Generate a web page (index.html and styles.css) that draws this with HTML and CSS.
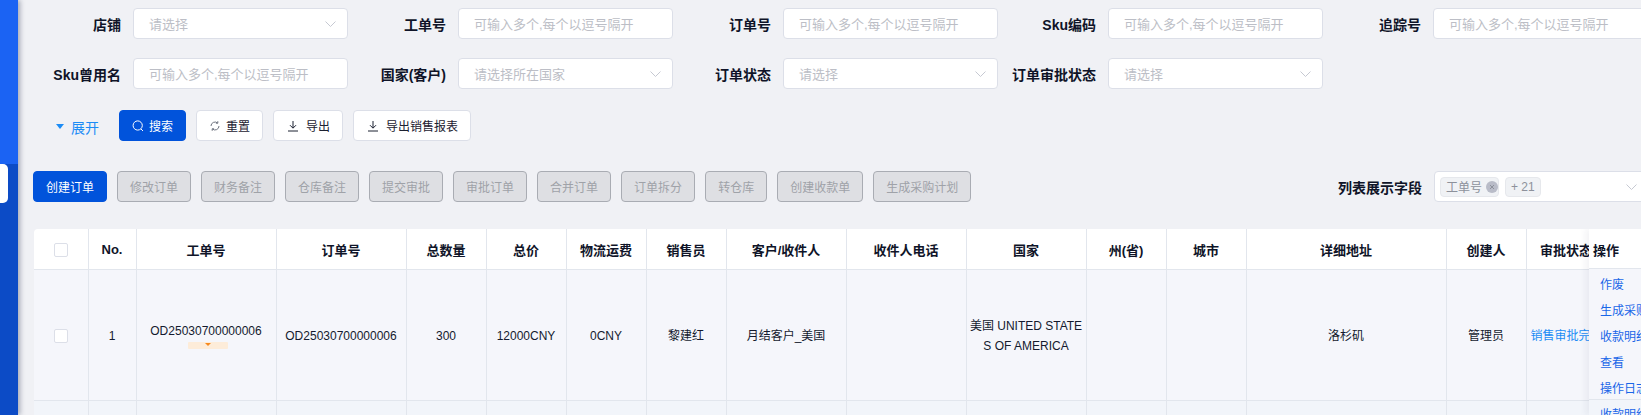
FILE: index.html
```html
<!DOCTYPE html>
<html lang="zh-CN">
<head>
<meta charset="utf-8">
<title>订单列表</title>
<link rel="stylesheet" href="styles.css">
</head>
<body>
<div class="app">
  <aside class="sidebar"><div class="side-active"></div></aside>
  <main class="main">
    <section class="filters">
      <div class="item"><span class="label">店铺</span><div class="field"><span class="ph">请选择</span><svg class="chev" viewBox="0 0 11 6"><path d="M.5.5l5 5 5-5"/></svg></div></div>
      <div class="item"><span class="label">工单号</span><div class="field"><span class="ph">可输入多个,每个以逗号隔开</span></div></div>
      <div class="item"><span class="label">订单号</span><div class="field"><span class="ph">可输入多个,每个以逗号隔开</span></div></div>
      <div class="item"><span class="label">Sku编码</span><div class="field"><span class="ph">可输入多个,每个以逗号隔开</span></div></div>
      <div class="item"><span class="label">追踪号</span><div class="field"><span class="ph">可输入多个,每个以逗号隔开</span></div></div>
      <div class="item"><span class="label">Sku曾用名</span><div class="field"><span class="ph">可输入多个,每个以逗号隔开</span></div></div>
      <div class="item"><span class="label">国家(客户)</span><div class="field"><span class="ph">请选择所在国家</span><svg class="chev" viewBox="0 0 11 6"><path d="M.5.5l5 5 5-5"/></svg></div></div>
      <div class="item"><span class="label">订单状态</span><div class="field"><span class="ph">请选择</span><svg class="chev" viewBox="0 0 11 6"><path d="M.5.5l5 5 5-5"/></svg></div></div>
      <div class="item"><span class="label">订单审批状态</span><div class="field"><span class="ph">请选择</span><svg class="chev" viewBox="0 0 11 6"><path d="M.5.5l5 5 5-5"/></svg></div></div>
    </section>

    <section class="actions">
      <div class="expand"><i class="tri"></i><span>展开</span></div>
      <button class="btn primary"><svg class="ico" viewBox="0 0 12 12"><circle cx="5.7" cy="5.5" r="4.6"/><path d="M9 9l2 2"/></svg>搜索</button>
      <button class="btn"><svg class="ico" viewBox="0 0 12 12"><path d="M2 6a4 4 0 0 1 6.6-3M10 6a4 4 0 0 1-6.6 3"/><path d="M8.8 1.2v2H6.9M3.2 10.8v-2h1.9"/></svg>重置</button>
      <button class="btn wide"><svg class="ico dl" viewBox="0 0 14 14"><path d="M7 2v7M4 6.2L7 9.2l3-3M2 12h10"/></svg>导出</button>
      <button class="btn wide"><svg class="ico dl" viewBox="0 0 14 14"><path d="M7 2v7M4 6.2L7 9.2l3-3M2 12h10"/></svg>导出销售报表</button>
    </section>

    <section class="toolbar">
      <button class="btn primary">创建订单</button>
      <button class="btn off">修改订单</button>
      <button class="btn off">财务备注</button>
      <button class="btn off">仓库备注</button>
      <button class="btn off">提交审批</button>
      <button class="btn off">审批订单</button>
      <button class="btn off">合并订单</button>
      <button class="btn off">订单拆分</button>
      <button class="btn off">转仓库</button>
      <button class="btn off">创建收款单</button>
      <button class="btn off">生成采购计划</button>
      <div class="columns-pick">
        <span class="label">列表展示字段</span>
        <div class="field multi">
          <span class="tag">工单号<i class="tag-x"><svg viewBox="0 0 12 12"><path d="M4 4l4 4M8 4l-4 4"/></svg></i></span>
          <span class="tag">+ 21</span>
          <svg class="chev" viewBox="0 0 11 6"><path d="M.5.5l5 5 5-5"/></svg>
        </div>
      </div>
    </section>

    <section class="table-wrap">
      <table class="grid">
        <colgroup>
          <col class="c54"><col class="c48"><col class="c140"><col class="c130"><col class="c80"><col class="c80"><col class="c80"><col class="c80"><col class="c120"><col class="c120"><col class="c120"><col class="c80"><col class="c80"><col class="c200"><col class="c80"><col class="c80">
        </colgroup>
        <thead>
          <tr>
            <th><span class="check"></span></th><th>No.</th><th>工单号</th><th>订单号</th><th>总数量</th><th>总价</th><th>物流运费</th><th>销售员</th><th>客户/收件人</th><th>收件人电话</th><th>国家</th><th>州(省)</th><th>城市</th><th>详细地址</th><th>创建人</th><th>审批状态</th>
          </tr>
        </thead>
        <tbody>
          <tr class="row">
            <td><span class="check"></span></td><td>1</td>
            <td><div class="order-no">OD25030700000006</div><div class="flag"><i></i></div></td>
            <td>OD25030700000006</td><td>300</td><td>12000CNY</td><td>0CNY</td><td>黎建红</td><td>月结客户_美国</td><td></td>
            <td class="country">美国 UNITED STATES OF AMERICA</td><td></td><td></td><td>洛杉矶</td><td>管理员</td><td class="status">销售审批完成</td>
          </tr>
          <tr class="row next">
            <td></td><td></td><td></td><td></td><td></td><td></td><td></td><td></td><td></td><td></td><td></td><td></td><td></td><td></td><td></td><td></td>
          </tr>
        </tbody>
      </table>
      <div class="fixed">
        <div class="fixed-head">操作</div>
        <div class="fixed-row">
          <a>作废</a><a>生成采购计划</a><a>收款明细</a><a>查看</a><a>操作日志</a><a>收款明细</a>
        </div>
      </div>
    </section>
  </main>
</div>
</body>
</html>
```
FILE: styles.css
```css
* { box-sizing: border-box; }
html, body { margin: 0; height: 100%; overflow: hidden; }
body {
  background: #f0f1f5;
  color: #141a2e;
  font-family: "Liberation Sans", "Noto Sans CJK SC", sans-serif;
  font-size: 12px;
}
.app { display: flex; height: 415px; overflow: hidden; }

.sidebar {
  flex: 0 0 18px;
  position: relative;
  background: linear-gradient(#1b63f3 0, #1b63f3 164px, #0c4bc6 164px, #0c4bc6 100%);
  box-shadow: 2px 0 5px rgba(20, 30, 60, .35);
}
.side-active {
  position: absolute;
  top: 164px;
  left: 0;
  width: 8px;
  height: 39px;
  background: #fff;
  border-radius: 0 5px 5px 0;
}

.main { flex: 1 0 auto; width: 1623px; padding-top: 8px; overflow: hidden; }

.filters {
  display: grid;
  grid-template-columns: repeat(5, 325px);
  row-gap: 19px;
  padding-left: 4px;
  width: 1650px;
}
.item { display: flex; align-items: center; gap: 12px; }
.label {
  width: 99px;
  flex: none;
  text-align: right;
  font-size: 14px;
  font-weight: 700;
  color: #0f1428;
  white-space: nowrap;
}
.field {
  width: 215px;
  height: 31px;
  flex: none;
  display: flex;
  align-items: center;
  padding: 0 11px 0 15px;
  background: #fff;
  border: 1px solid #dcdfe8;
  border-radius: 4px;
}
.ph { font-size: 13px; color: #bcbec6; white-space: nowrap; }
.chev { width: 11px; height: 6px; margin-left: auto; flex: none; }
.chev path { fill: none; stroke: #c6c9d2; stroke-width: 1; }

.actions {
  display: flex;
  align-items: center;
  gap: 10px;
  margin-top: 21px;
  padding-left: 38px;
}
.expand {
  width: 53px;
  display: flex;
  align-items: center;
  gap: 7px;
  padding-top: 2px;
  color: #1c8cf5;
  font-size: 14px;
}
.tri {
  width: 0;
  height: 0;
  border-left: 4.5px solid transparent;
  border-right: 4.5px solid transparent;
  border-top: 5px solid #1c8cf5;
}

.btn {
  height: 31px;
  padding: 0 12px;
  display: inline-flex;
  align-items: center;
  flex: none;
  gap: 5px;
  font: inherit;
  font-size: 12px;
  color: #1b2030;
  background: #fff;
  border: 1px solid #dcdfe8;
  border-radius: 4px;
}
.btn.wide { gap: 6px; }
.btn.primary { background: #0153db; border-color: #0153db; color: #fff; }
.btn.off { background: #dedfe3; border-color: #a9acb3; color: #9fa2a8; }
.ico { width: 12px; height: 12px; flex: none; fill: none; stroke: currentColor; stroke-width: 1; }
.btn:not(.primary) > .ico:not(.dl) { stroke: #6f7480; }
.ico.dl { width: 14px; height: 14px; stroke: #1b2030; }

.toolbar {
  display: flex;
  align-items: center;
  gap: 10px;
  width: 1616px;
  margin: 30px 0 0 15px;
}
.columns-pick { margin-left: auto; display: flex; align-items: center; gap: 12px; }
.field.multi { padding: 0 11px 0 5px; gap: 6px; }
.tag {
  height: 20px;
  display: inline-flex;
  align-items: center;
  gap: 4px;
  padding: 0 5px;
  color: #8d919b;
  background: #f0f2f5;
  border: 1px solid #e6e8ec;
  border-radius: 4px;
  white-space: nowrap;
}
.tag-x { width: 12px; height: 12px; margin-right: -5px; background: #b9bcc8; border-radius: 50%; display: block; }
.tag-x svg { display: block; width: 12px; height: 12px; fill: none; stroke: #8d919b; stroke-width: 1; }

.table-wrap {
  position: relative;
  margin: 27px 0 0 16px;
  width: 1607px;
  height: 186px;
  overflow: hidden;
  border-radius: 4px 0 0 0;
}
.grid {
  table-layout: fixed;
  width: 1572px;
  border-collapse: collapse;
  background: #fff;
}
.c48 { width: 48px; } .c54 { width: 54px; } .c80 { width: 80px; }
.c120 { width: 120px; } .c130 { width: 130px; } .c140 { width: 140px; } .c200 { width: 200px; }
.grid th, .grid td {
  padding: 2px 8px 0;
  text-align: center;
  border: 1px solid #e2e6ed;
  border-top: 0;
}
.grid th:first-child, .grid td:first-child { border-left: 0; }
.grid th { height: 40px; font-size: 13px; font-weight: 700; color: #0f1428; white-space: nowrap; }
.grid td { font-size: 12px; line-height: 20px; color: #141a2e; word-break: break-all; }
.row td { height: 131px; background: #f5f6fb; }
.row.next td { height: 40px; background: #f2f5fa; }
.grid td.country { padding: 2px 3px 0; }
.grid td.status { padding: 2px 4px 0; color: #1c8cf5; white-space: nowrap; }
.check {
  display: block;
  width: 14px;
  height: 14px;
  margin: 0 auto;
  background: #fff;
  border: 1px solid #dcdfe8;
  border-radius: 2px;
}
.order-no { line-height: 16px; }
.flag {
  position: relative;
  left: 2px;
  width: 40px;
  height: 7px;
  margin: 3px auto 0;
  background: #fdecd9;
  border-radius: 1px;
}
.flag i {
  position: absolute;
  top: 1px;
  left: 17px;
  border-left: 3px solid transparent;
  border-right: 3px solid transparent;
  border-top: 3px solid #f7891e;
}

.fixed {
  position: absolute;
  top: 0;
  left: 1555px;
  width: 90px;
  height: 100%;
  background: #f2f5fa;
  box-shadow: -4px 0 6px rgba(30, 40, 70, .05);
}
.fixed-head {
  height: 40px;
  padding: 2px 4px 0;
  display: flex;
  align-items: center;
  background: #fff;
  border-bottom: 1px solid #e2e6ed;
  font-size: 13px;
  font-weight: 700;
  color: #0f1428;
}
.fixed-row {
  height: 131px;
  padding: 3px 11px 0;
  background: #f5f6fb;
  border-bottom: 1px solid #e2e6ed;
}
.fixed-row a {
  display: block;
  height: 26px;
  line-height: 26px;
  color: #1a66e8;
  white-space: nowrap;
}
```
